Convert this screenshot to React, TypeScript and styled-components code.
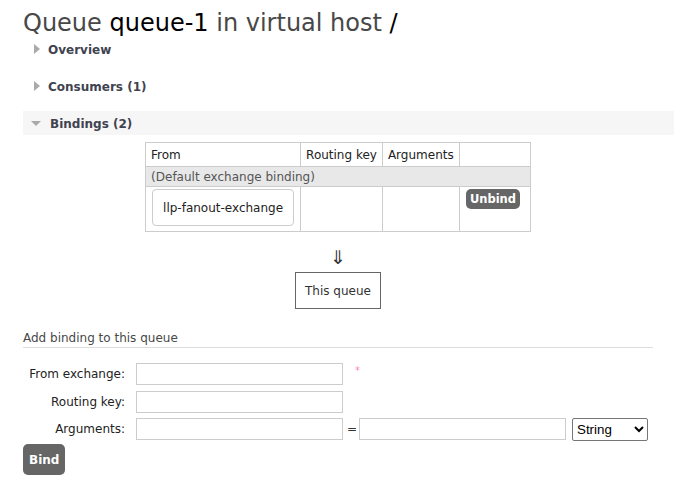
import React from "react";
import styled, { createGlobalStyle } from "styled-components";

const Global = createGlobalStyle`
  html, body { margin: 0; padding: 0; background: #fff; }
  body { font-family: "DejaVu Sans", Verdana, sans-serif; font-size: 12px; color: #484848; }
`;

const Main = styled.div`
  width: 630px;
  padding: 0 0 0 23px;
`;

const Title = styled.h1`
  margin: 0;
  padding-top: 9px;
  height: 28px;
  font-size: 24px;
  font-weight: normal;
  line-height: 28px;
  color: #484848;
  white-space: nowrap;
  b { font-weight: normal; color: #000; }
`;

const Section = styled.div`
  margin-bottom: 13px;
`;

const SectionHeader = styled.div<{ $open?: boolean }>`
  height: 24px;
  margin-right: -21px;
  display: flex;
  align-items: center;
  gap: 8px;
  padding-left: ${(p) => (p.$open ? "8px" : "11px")};
  background: ${(p) => (p.$open ? "#f6f6f6" : "transparent")};
  font-weight: bold;
  font-size: 12px;
  color: #3f4350;
  span.t { padding-top: 1px; }
`;

const Tri = styled.span<{ $open?: boolean }>`
  width: 0;
  height: 0;
  display: inline-block;
  ${(p) =>
    p.$open
      ? `border-left: 5px solid transparent; border-right: 5px solid transparent; border-top: 5px solid #aaa; margin-right: 1px;`
      : `border-top: 5px solid transparent; border-bottom: 5px solid transparent; border-left: 6px solid #aaa;`}
`;

const Bindings = styled.div`
  display: flex;
  flex-direction: column;
  align-items: center;
  padding-top: 7px;
`;

const Table = styled.table`
  border-collapse: collapse;
  table-layout: fixed;
  font-size: 12px;
  color: #222;
  th, td { border: 1px solid #ccc; }
  th {
    font-weight: normal;
    text-align: left;
    height: 23px;
    padding: 0 5px;
    color: #222;
    white-space: nowrap;
  }
`;

const GroupRow = styled.td`
  background: #e8e8e8;
  color: #555;
  height: 19px;
  padding: 0 5px;
`;

const Cell = styled.td`
  vertical-align: top;
  height: 40px;
  padding: 2px 6px;
`;

const ExchangeBox = styled.div`
  border: 1px solid #ccc;
  border-radius: 4px;
  width: 140px;
  height: 35px;
  display: flex;
  align-items: center;
  justify-content: center;
  color: #222;
  background: #fff;
`;

const Btn = styled.button<{ $tall?: boolean }>`
  background: #666;
  color: #fff;
  border: none;
  border-radius: 5px;
  font-family: "DejaVu Sans", Verdana, sans-serif;
  font-weight: bold;
  font-size: ${(p) => (p.$tall ? "12px" : "11.5px")};
  padding: 0 ${(p) => (p.$tall ? "6px" : "4px")};
  height: ${(p) => (p.$tall ? "31px" : "20px")};
  cursor: pointer;
`;

const Arrow = styled.div`
  font-size: 19px;
  color: #333;
  line-height: 20px;
  margin-top: 15px;
  height: 20px;
`;

const QueueBox = styled.div`
  margin-top: 5px;
  border: 1px solid #666;
  width: 84px;
  height: 35px;
  display: flex;
  align-items: center;
  justify-content: center;
  color: #333;
`;

const SubHeading = styled.h3`
  margin: 22px 0 0;
  font-size: 12px;
  font-weight: normal;
  color: #484848;
  padding-bottom: 1px;
  border-bottom: 1px solid #ddd;
  line-height: 15px;
`;

const Form = styled.div`
  display: flex;
  flex-direction: column;
  margin-top: 15px;
`;

const Row = styled.div<{ $gap: number }>`
  display: flex;
  align-items: center;
  gap: 11px;
  height: 22px;
  margin-top: ${(p) => p.$gap}px;
`;

const Label = styled.label`
  width: 102px;
  text-align: right;
  color: #222;
  font-size: 12px;
`;

const Field = styled.div`
  display: flex;
  align-items: center;
  gap: 4px;
  height: 22px;
`;

const Input = styled.input`
  width: 207px;
  height: 22px;
  box-sizing: border-box;
  border: 1px solid #ccc;
  margin: 0;
  padding: 0 3px;
`;

const Star = styled.span`
  color: #f08;
  opacity: 0.5;
  font-size: 10px;
  margin-left: 8px;
  align-self: flex-start;
  margin-top: 2px;
`;

const Eq = styled.span`
  color: #333;
  font-size: 12px;
  width: 8px;
  text-align: center;
`;

const Select = styled.select`
  height: 23px;
  width: 76px;
  font-family: "Liberation Sans", Arial, sans-serif;
  font-size: 13.33px;
  border: 1px solid #767676;
  border-radius: 2px;
  background: #fff;
  color: #000;
  margin-left: 2px;
`;

const BindRow = styled.div`
  margin-top: 4px;
`;

export default function App() {
  return (
    <Main>
      <Global />
      <Title>
        Queue <b>queue-1</b> in virtual host <b>/</b>
      </Title>
      <Section>
        <SectionHeader>
          <Tri />
          <span className="t">Overview</span>
        </SectionHeader>
      </Section>
      <Section>
        <SectionHeader>
          <Tri />
          <span className="t">Consumers (1)</span>
        </SectionHeader>
      </Section>
      <div>
        <SectionHeader $open>
          <Tri $open />
          <span className="t">Bindings (2)</span>
        </SectionHeader>
        <Bindings>
          <Table>
            <colgroup>
              <col style={{ width: 155 }} />
              <col style={{ width: 81 }} />
              <col style={{ width: 77 }} />
              <col style={{ width: 71 }} />
            </colgroup>
            <thead>
              <tr>
                <th>From</th>
                <th>Routing key</th>
                <th>Arguments</th>
                <th></th>
              </tr>
            </thead>
            <tbody>
              <tr>
                <GroupRow colSpan={4}>(Default exchange binding)</GroupRow>
              </tr>
              <tr>
                <Cell>
                  <ExchangeBox>llp-fanout-exchange</ExchangeBox>
                </Cell>
                <Cell />
                <Cell />
                <Cell>
                  <Btn>Unbind</Btn>
                </Cell>
              </tr>
            </tbody>
          </Table>
          <Arrow>⇓</Arrow>
          <QueueBox>This queue</QueueBox>
        </Bindings>
        <SubHeading>Add binding to this queue</SubHeading>
        <Form>
          <Row $gap={0}>
            <Label>From exchange:</Label>
            <Field>
              <Input />
              <Star>*</Star>
            </Field>
          </Row>
          <Row $gap={6}>
            <Label>Routing key:</Label>
            <Field>
              <Input />
            </Field>
          </Row>
          <Row $gap={5}>
            <Label>Arguments:</Label>
            <Field>
              <Input />
              <Eq>=</Eq>
              <Input />
              <Select defaultValue="String">
                <option>String</option>
                <option>Number</option>
                <option>Boolean</option>
                <option>List</option>
              </Select>
            </Field>
          </Row>
        </Form>
        <BindRow>
          <Btn $tall>Bind</Btn>
        </BindRow>
      </div>
    </Main>
  );
}
